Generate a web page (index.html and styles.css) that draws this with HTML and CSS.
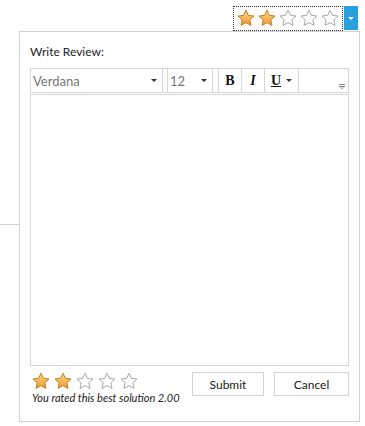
FILE: index.html
```html
<!DOCTYPE html>
<html lang="en">
<head>
    <meta charset="UTF-8">
    <title>Rating</title>
    <link rel="stylesheet" href="styles.css">
</head>
<body>
    <svg width="0" height="0" class="defs">
        <defs>
            <linearGradient id="gold" x1="0" y1="0" x2="0" y2="1">
                <stop offset="0" stop-color="#fddc8c"/>
                <stop offset="1" stop-color="#f0962c"/>
            </linearGradient>
            <symbol id="star" viewBox="0 0 18 18">
                <path d="M9 1.2l2.4 5.2 5.6.6-4.2 3.8 1.2 5.6L9 13.6l-5 2.8 1.2-5.6L1 7l5.6-.6z"/>
            </symbol>
        </defs>
    </svg>

    <div class="backline"></div>

    <!-- Rating trigger -->
    <div class="trigger">
        <div class="trigger-stars">
            <svg class="star on"><use href="#star"/></svg>
            <svg class="star on"><use href="#star"/></svg>
            <svg class="star"><use href="#star"/></svg>
            <svg class="star"><use href="#star"/></svg>
            <svg class="star"><use href="#star"/></svg>
        </div>
        <div class="trigger-btn"><span class="caret white"></span></div>
    </div>

    <!-- Review popup -->
    <div class="popup">
        <div class="popup-title">Write Review:</div>
        <div class="toolbar">
            <div class="select font-select">Verdana<span class="caret"></span></div>
            <div class="select size-select">12<span class="caret"></span></div>
            <div class="format-group">
                <span class="fmt bold">B</span>
                <span class="fmt italic">I</span>
                <span class="fmt under">U<span class="caret"></span></span>
            </div>
            <svg class="grip" width="6" height="5" viewBox="0 0 6 5">
                <path d="M0 .5h6M0 2.5h6" stroke="#888" stroke-width="1"/>
                <path d="M1 3.5h4L3 5z" fill="#888"/>
            </svg>
        </div>
        <div class="editor"></div>
        <div class="popup-footer">
            <div class="rating">
                <div class="rating-stars">
                    <svg class="star on"><use href="#star"/></svg>
                    <svg class="star on"><use href="#star"/></svg>
                    <svg class="star"><use href="#star"/></svg>
                    <svg class="star"><use href="#star"/></svg>
                    <svg class="star"><use href="#star"/></svg>
                </div>
                <div class="rating-note">You rated this best solution 2.00</div>
            </div>
            <button class="btn">Submit</button>
            <button class="btn">Cancel</button>
        </div>
    </div>
</body>
</html>
```

FILE: styles.css
```css
body {
    margin: 0;
    width: 365px;
    height: 426px;
    position: relative;
    background: #fff;
    font-family: "Segoe UI", Lato, "Noto Sans", sans-serif;
    font-size: 12px;
    color: #222;
}

.defs {
    position: absolute;
}

.backline {
    position: absolute;
    left: 0;
    top: 224px;
    width: 19px;
    height: 1px;
    background: #cfcfcf;
}

/* Stars */
.star {
    width: 18px;
    height: 18px;
    fill: #fff;
    stroke: #a8a8a8;
    stroke-width: 1;
    stroke-linejoin: round;
}

.star.on {
    fill: url(#gold);
    stroke: #c77a1d;
}

/* Trigger */
.trigger {
    position: absolute;
    top: 6px;
    left: 233px;
    display: flex;
}

.trigger-stars {
    display: flex;
    gap: 3px;
    padding: 2px 3px 1px 3px;
    border: 1px dotted #333;
    height: 20px;
}

.trigger-btn {
    width: 14px;
    height: 24px;
    margin-left: 1px;
    background: #27a0db;
    display: flex;
    align-items: center;
    justify-content: center;
}

.caret {
    display: inline-block;
    width: 0;
    height: 0;
    border-left: 3px solid transparent;
    border-right: 3px solid transparent;
    border-top: 3px solid #333;
}

.caret.white {
    border-top-color: #fff;
}

/* Popup */
.popup {
    position: absolute;
    left: 19px;
    top: 31px;
    width: 319px;
    height: 369px;
    padding: 10px;
    border: 1px solid #d2d2d2;
    background: #fff;
}

.popup-title {
    font-size: 12px;
    margin: 2px 0 8px 0;
    line-height: 16px;
}

.toolbar {
    display: flex;
    align-items: stretch;
    height: 23px;
    border: 1px solid #d6d6d6;
    position: relative;
}

.select {
    display: flex;
    align-items: center;
    justify-content: space-between;
    border-right: 1px solid #d6d6d6;
    color: #777;
    font-size: 13px;
    padding: 0 5px 0 2px;
}

.font-select {
    width: 124px;
}

.size-select {
    width: 37px;
    margin-left: 4px;
    border-left: 1px solid #d6d6d6;
}

.format-group {
    display: flex;
    margin-left: 5px;
    border-left: 1px solid #d6d6d6;
    border-right: 1px solid #d6d6d6;
}

.fmt {
    width: 22px;
    display: flex;
    align-items: center;
    justify-content: center;
    font-family: "Liberation Serif", serif;
    font-size: 14px;
    font-weight: bold;
    color: #111;
    border-right: 1px solid #d6d6d6;
}

.fmt.italic {
    font-style: italic;
}

.fmt.under {
    width: 33px;
    border-right: none;
    text-decoration: underline;
    gap: 5px;
}

.grip {
    position: absolute;
    right: 3px;
    bottom: 3px;
}

.editor {
    height: 270px;
    margin-top: 1px;
    border: 1px solid #d6d6d6;
}

.popup-footer {
    display: flex;
    align-items: flex-start;
    margin-top: 6px;
}

.rating {
    flex: 1;
    padding-left: 2px;
}

.rating-stars {
    display: flex;
    gap: 4px;
    height: 18px;
}

.rating-note {
    font-style: italic;
    font-size: 11px;
    margin-top: 1px;
    white-space: nowrap;
}

.btn {
    width: 72px;
    height: 24px;
    margin-left: 10px;
    background: #fff;
    border: 1px solid #d2d2d2;
    font-family: inherit;
    font-size: 12px;
    color: #222;
    padding: 0;
}

.btn + .btn {
    width: 75px;
}
```
